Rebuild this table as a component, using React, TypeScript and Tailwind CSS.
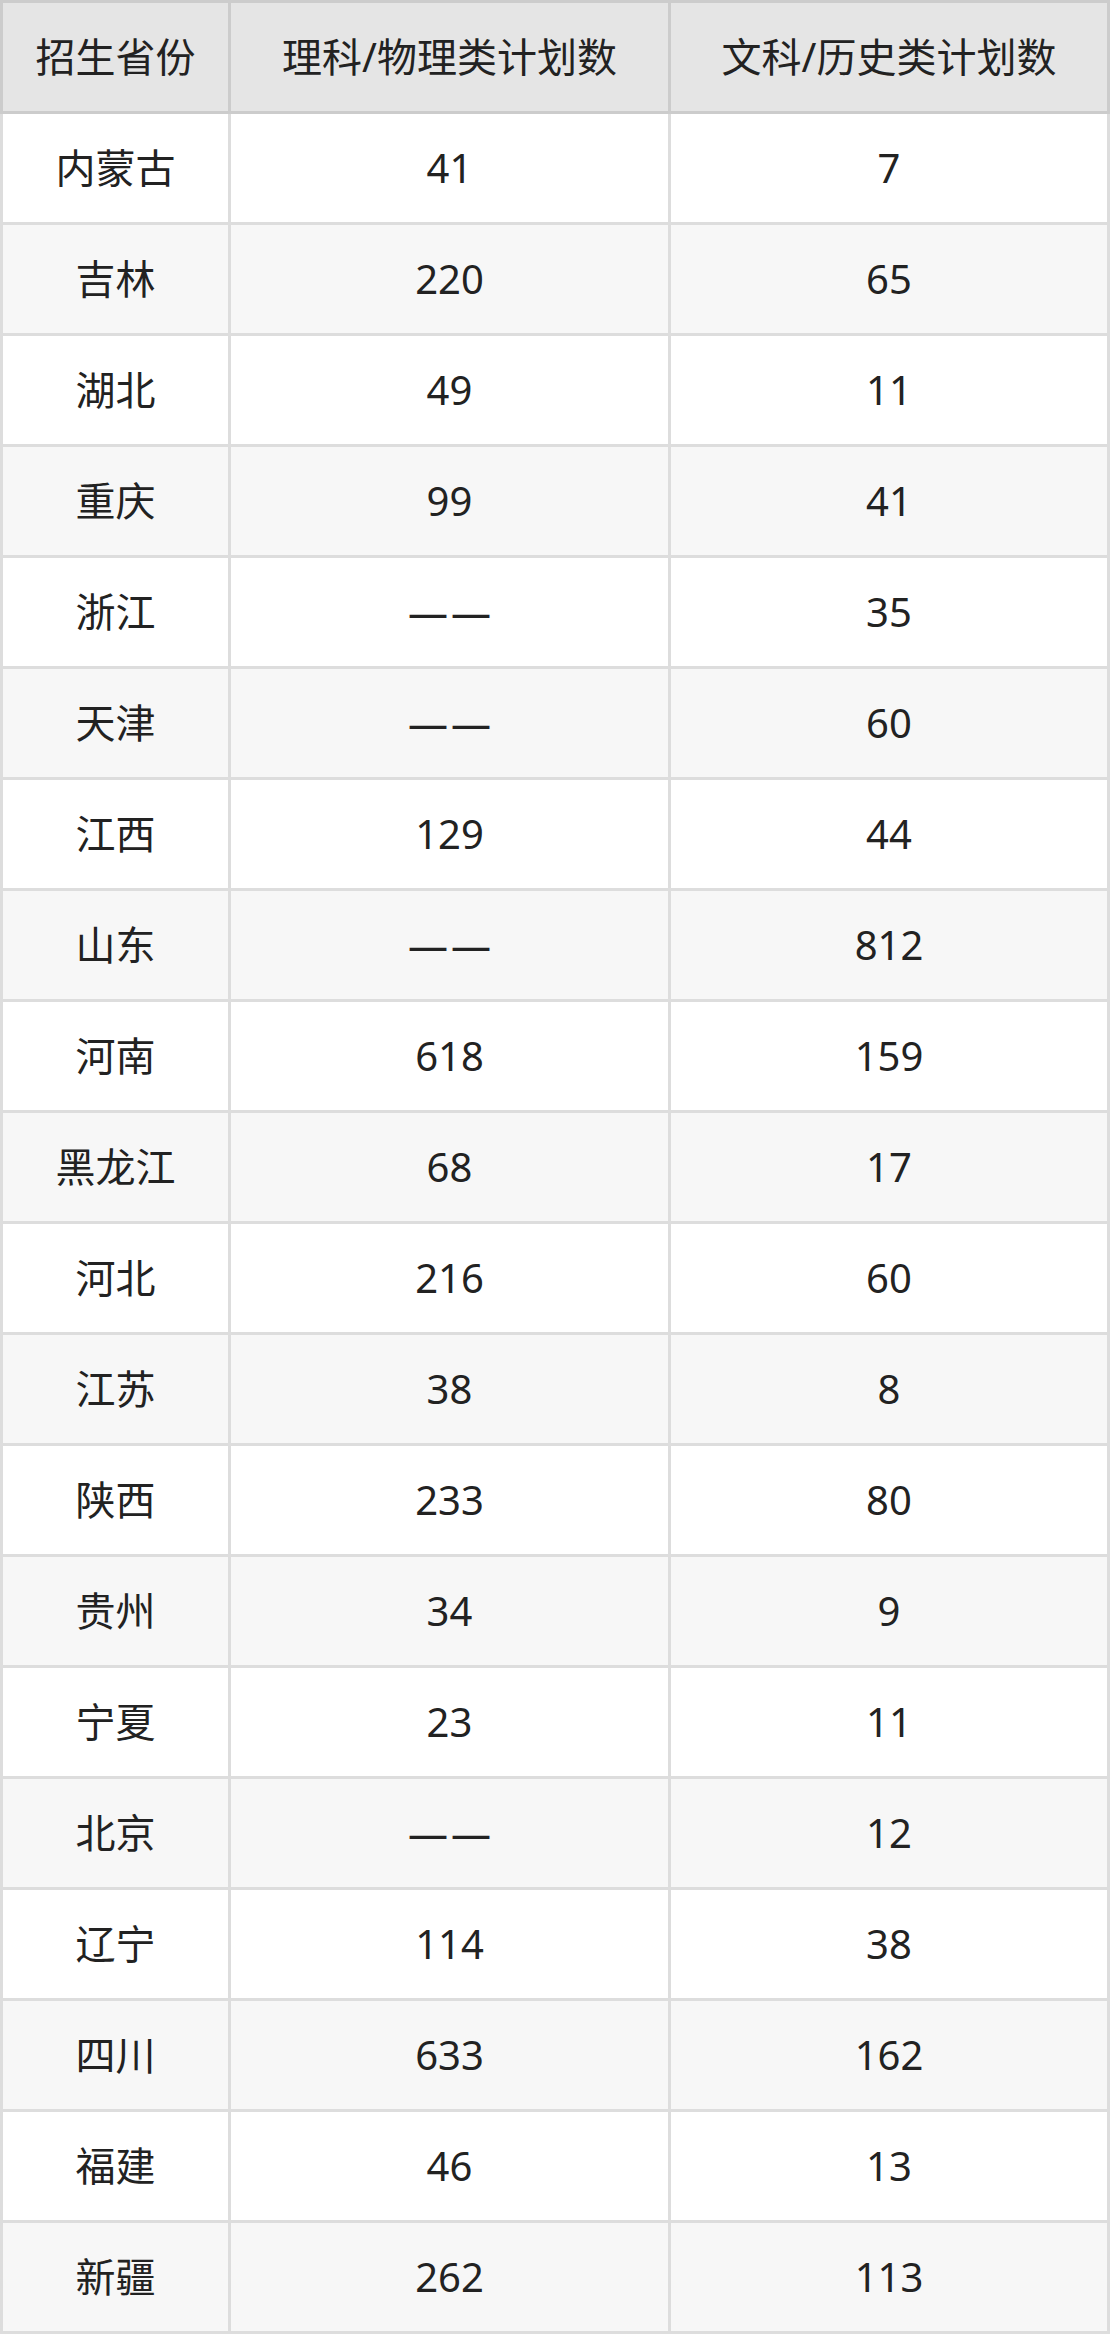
const rows: [string, string, string][] = [
  ["内蒙古", "41", "7"],
  ["吉林", "220", "65"],
  ["湖北", "49", "11"],
  ["重庆", "99", "41"],
  ["浙江", "——", "35"],
  ["天津", "——", "60"],
  ["江西", "129", "44"],
  ["山东", "——", "812"],
  ["河南", "618", "159"],
  ["黑龙江", "68", "17"],
  ["河北", "216", "60"],
  ["江苏", "38", "8"],
  ["陕西", "233", "80"],
  ["贵州", "34", "9"],
  ["宁夏", "23", "11"],
  ["北京", "——", "12"],
  ["辽宁", "114", "38"],
  ["四川", "633", "162"],
  ["福建", "46", "13"],
  ["新疆", "262", "113"],
];

const font = "font-['Noto_Sans','Noto_Sans_CJK_SC',sans-serif]";

function Cell({ children, first }: { children: string; first?: boolean }) {
  const dash = children === "——";
  return (
    <td
      className={`border-b-[3px] border-r-[3px] border-[#dddddd] p-0 ${first ? "border-l-[3px]" : ""}`}
    >
      <div className="flex h-[108px] items-center justify-center">
        <span className={dash ? "pl-[3px] tracking-[3px]" : ""}>{children}</span>
      </div>
    </td>
  );
}

export default function App() {
  return (
    <div className={`w-[1110px] bg-white text-[40px] text-[#222222] ${font}`}>
      <table className="w-[1110px] table-fixed border-separate border-spacing-0">
        <colgroup>
          <col className="w-[231px]" />
          <col className="w-[440px]" />
          <col className="w-[439px]" />
        </colgroup>
        <thead>
          <tr className="bg-[#e5e5e5]">
            {["招生省份", "理科/物理类计划数", "文科/历史类计划数"].map((h, i) => (
              <th
                key={h}
                className={`border-y-[3px] border-r-[3px] border-[#cccccc] p-0 font-normal ${i === 0 ? "border-l-[3px]" : ""}`}
              >
                <div className="flex h-[108px] items-center justify-center">{h}</div>
              </th>
            ))}
          </tr>
        </thead>
        <tbody>
          {rows.map(([p, a, b], i) => (
            <tr key={p} className={i % 2 === 0 ? "bg-white" : "bg-[#f7f7f7]"}>
              <Cell first>{p}</Cell>
              <Cell>{a}</Cell>
              <Cell>{b}</Cell>
            </tr>
          ))}
        </tbody>
      </table>
    </div>
  );
}
